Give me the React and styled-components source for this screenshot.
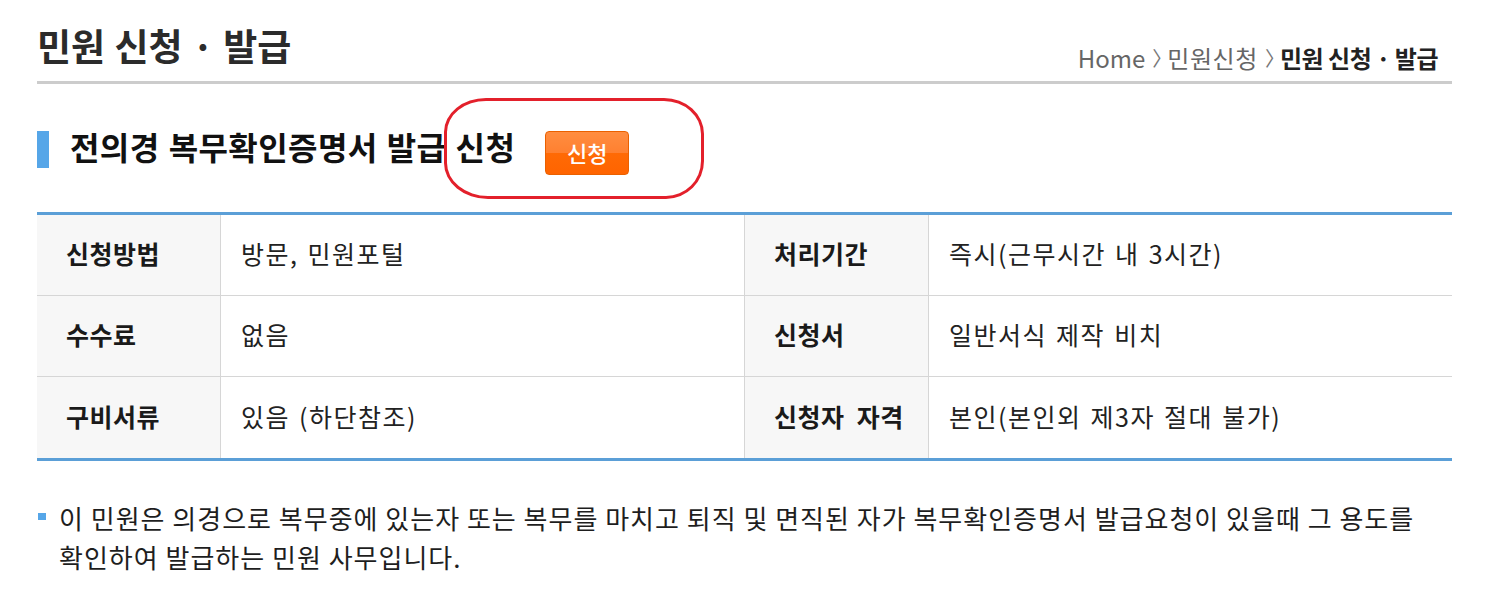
import React from "react";
import styled, { createGlobalStyle } from "styled-components";

const Global = createGlobalStyle`
  html, body { margin: 0; padding: 0; background: #fff; }
  body { font-family: "Noto Sans CJK KR", "Noto Sans", sans-serif; color: #222; }
  * { box-sizing: border-box; }
`;

const Page = styled.div`
  width: 1452px;
  padding-left: 37px;
`;

const Header = styled.header`
  display: flex;
  justify-content: space-between;
  align-items: flex-start;
  height: 84px;
  border-bottom: 3px solid #cccccc;
`;

const Title = styled.h1`
  margin: 0;
  padding-top: 23px;
  font-size: 37px;
  line-height: 44px;
  font-weight: 700;
  color: #2b2b2b;
  word-spacing: 1px;
`;

const Breadcrumb = styled.nav`
  display: flex;
  align-items: center;
  padding-top: 43px;
  padding-right: 14px;
  font-size: 24px;
  line-height: 30px;
  color: #666;
`;

const Crumb = styled.span`
  font-weight: ${(p) => (p.$current ? 700 : 400)};
  color: ${(p) => (p.$current ? "#222" : "#666")};
  letter-spacing: ${(p) => (p.$latin ? "0" : p.$current ? "-0.5px" : "0.6px")};
`;

const Sep = styled.span`
  display: inline-block;
  margin: 0 4px 0 7px;
  font-size: 20px;
  letter-spacing: -9px;
  white-space: nowrap;
  color: #777;
`;

const SectionRow = styled.div`
  position: relative;
  display: flex;
  align-items: flex-start;
  margin-top: 47px;
  height: 44px;
`;

const Bar = styled.span`
  flex: none;
  width: 12px;
  height: 37px;
  background: #56a6e8;
`;

const SectionTitle = styled.h2`
  margin: 0 0 0 21px;
  font-size: 32px;
  line-height: 31px;
  font-weight: 700;
  color: #111;
  letter-spacing: 0.4px;
  word-spacing: 1.5px;
  white-space: nowrap;
`;

const ApplyButton = styled.button`
  flex: none;
  margin-left: 30px;
  width: 84px;
  height: 44px;
  border: 1px solid #ea6000;
  border-radius: 4px;
  background: linear-gradient(to bottom, #ff8d40 0%, #ff8030 50%, #ff6a05 51%, #ff6400 100%);
  color: #fff;
  font-family: "Noto Sans CJK KR", sans-serif;
  font-size: 22px;
  font-weight: 500;
  line-height: 1;
  padding: 0 0 3px;
  cursor: pointer;
`;

const Annotation = styled.div`
  position: absolute;
  left: 407px;
  top: -33px;
  width: 260px;
  height: 101px;
  border: 3px solid #e3202b;
  border-radius: 42px 40px 38px 44px / 34px 36px 38px 36px;
  pointer-events: none;
`;

const Table = styled.div`
  margin-top: 37px;
  display: grid;
  grid-template-columns: 183px 524px 184px 1fr;
  border-top: 3px solid #5b9fd7;
  border-bottom: 3px solid #5b9fd7;
`;

const Cell = styled.div`
  height: 81px;
  display: flex;
  align-items: center;
  padding-bottom: 4px;
  font-size: 25px;
  border-bottom: ${(p) => (p.$last ? "0" : "1px solid #d6d6d6")};
  border-left: ${(p) => (p.$first ? "0" : "1px solid #d6d6d6")};
  white-space: nowrap;
  ${(p) =>
    p.$label
      ? `
    background: #f7f7f7;
    font-weight: 700;
    color: #1a1a1a;
    padding-left: 29px;
    letter-spacing: 0.5px;
    word-spacing: 6px;
  `
      : `
    background: #fff;
    font-weight: 400;
    color: #222;
    padding-left: 20px;
    letter-spacing: 1.5px;
    word-spacing: 2px;
  `}
`;

const Desc = styled.p`
  position: relative;
  margin: 37px 0 0;
  padding-left: 22px;
  font-size: 26px;
  line-height: 39px;
  color: #1e1e1e;
  word-break: keep-all;
  letter-spacing: 1px;
  &::before {
    content: "";
    position: absolute;
    left: 1px;
    top: 15px;
    width: 8px;
    height: 7px;
    background: #56a6e8;
  }
`;

const rows = [
  ["신청방법", "방문, 민원포털", "처리기간", "즉시(근무시간 내 3시간)"],
  ["수수료", "없음", "신청서", "일반서식 제작 비치"],
  ["구비서류", "있음 (하단참조)", "신청자 자격", "본인(본인외 제3자 절대 불가)"],
];

export default function App() {
  return (
    <>
      <Global />
      <Page>
        <Header>
          <Title>민원 신청 · 발급</Title>
          <Breadcrumb>
            <Crumb $latin>Home</Crumb>
            <Sep>〉</Sep>
            <Crumb>민원신청</Crumb>
            <Sep>〉</Sep>
            <Crumb $current>민원 신청 · 발급</Crumb>
          </Breadcrumb>
        </Header>

        <SectionRow>
          <Bar />
          <SectionTitle>전의경 복무확인증명서 발급 신청</SectionTitle>
          <ApplyButton type="button">신청</ApplyButton>
          <Annotation />
        </SectionRow>

        <Table>
          {rows.map((r, i) => {
            const last = i === rows.length - 1;
            return (
              <React.Fragment key={i}>
                <Cell $label $first $last={last}>{r[0]}</Cell>
                <Cell $last={last}>{r[1]}</Cell>
                <Cell $label $last={last}>{r[2]}</Cell>
                <Cell $last={last}>{r[3]}</Cell>
              </React.Fragment>
            );
          })}
        </Table>

        <Desc>
          이 민원은 의경으로 복무중에 있는자 또는 복무를 마치고 퇴직 및 면직된 자가 복무확인증명서 발급요청이 있을때 그 용도를 확인하여 발급하는 민원 사무입니다.
        </Desc>
      </Page>
    </>
  );
}
